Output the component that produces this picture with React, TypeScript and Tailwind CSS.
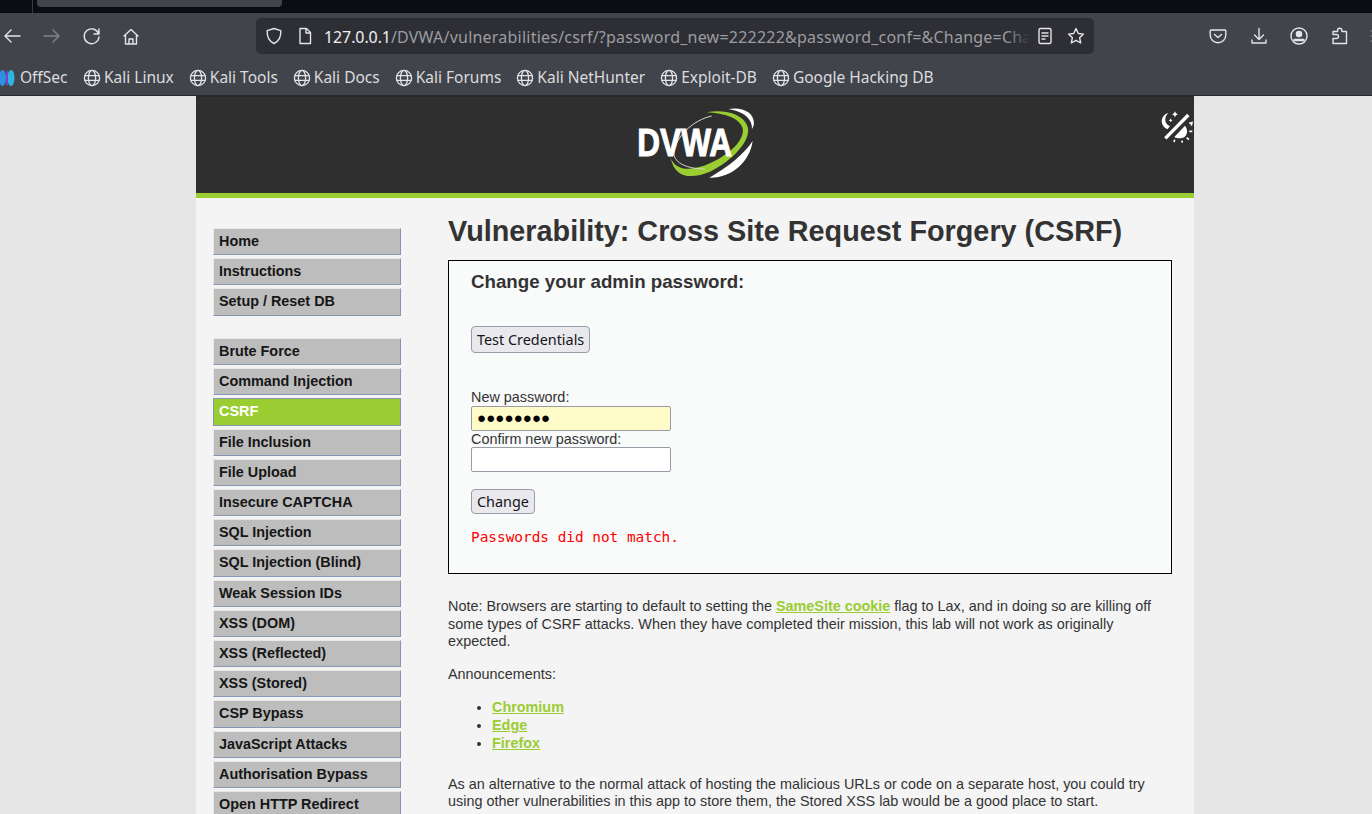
const firstMenu = ["Home", "Instructions", "Setup / Reset DB"];
const secondMenu = [
  "Brute Force", "Command Injection", "CSRF", "File Inclusion", "File Upload", "Insecure CAPTCHA",
  "SQL Injection", "SQL Injection (Blind)", "Weak Session IDs", "XSS (DOM)", "XSS (Reflected)",
  "XSS (Stored)", "CSP Bypass", "JavaScript Attacks", "Authorisation Bypass", "Open HTTP Redirect",
];
const bookmarks = ["Kali Linux", "Kali Tools", "Kali Docs", "Kali Forums", "Kali NetHunter", "Exploit-DB", "Google Hacking DB"];

function Globe() {
  return <svg width="18" height="18" viewBox="0 0 18 18" fill="none" stroke="#e4e4e6" strokeWidth="1.3" className="shrink-0">
    <circle cx="9" cy="9" r="7.6"/>
    <ellipse cx="9" cy="9" rx="3.6" ry="7.6"/>
    <path d="M1.6 6.6h14.8M1.6 11.4h14.8"/>
  </svg>
}

function ToolIcon({children, className = ""}: {children: React.ReactNode; className?: string}) {
  return <svg width="20" height="20" viewBox="0 0 20 20" fill="none" stroke="#e4e4e6" strokeWidth="1.4" strokeLinecap="round" strokeLinejoin="round" className={`shrink-0 ${className}`}>
    {children}
  </svg>
}

function Toolbar() {
  return <div className="h-[41px] pt-[5px] flex items-start overflow-hidden bg-[#42444c]">
    <div className="w-[40px] shrink-0 pl-[2px] pt-[8px]">
      <ToolIcon><path d="M18 10H3M9 4l-6 6 6 6"/></ToolIcon>
    </div>
    <div className="w-[40px] shrink-0 pl-[2px] pt-[8px]">
      <ToolIcon className="opacity-40"><path d="M2 10h15M11 4l6 6-6 6"/></ToolIcon>
    </div>
    <div className="w-[39px] shrink-0 pl-[2px] pt-[8px]">
      <ToolIcon><path d="M16.5 7.5A7.4 7.4 0 1 0 17 11M17 3v5h-5"/></ToolIcon>
    </div>
    <div className="w-[137px] shrink-0 pl-[2px] pt-[9px]">
      <ToolIcon><path d="M3 9l7-6.500L17 9M4.500 8v9h11V8M8 17v-5h4v5"/></ToolIcon>
    </div>
    <div className="w-[838px] h-[36px] shrink-0 flex items-center rounded-[5px] bg-[#2e2f35]">
      <div className="ml-[8px]">
        <ToolIcon><path d="M10 2.500l6.800 2.200c.3 6-1.700 10.400-6.800 12.800-5.100-2.400-7.100-6.800-6.800-12.800z"/></ToolIcon>
      </div>
      <div className="ml-[11px]">
        <ToolIcon><path d="M5 2.500h6.500l4 4v11h-10.500zM11 2.500v4.500h4.500"/></ToolIcon>
      </div>
      <div className="relative ml-[9px] pt-[1px] w-[706px] overflow-hidden whitespace-nowrap text-[16px] tracking-[0.220px] text-[#9c9da1]">
        <span className="text-[#f0f0f2] tracking-[-0.100px]">127.0.0.1</span>/DVWA/vulnerabilities/csrf/?password_new=222222&amp;password_conf=&amp;Change=Change
        <div className="absolute right-0 top-0 bottom-0 w-[24px] bg-gradient-to-r from-transparent to-[#2e2f35]"/>
      </div>
      <div className="ml-[5px]">
        <ToolIcon><rect x="4" y="2.500" width="12" height="15" rx="1.500"/><path d="M7 7h6M7 10h6M7 13h3"/></ToolIcon>
      </div>
      <div className="ml-[11px]">
        <ToolIcon><path d="M10 2.500l2.300 5 5.200.6-3.900 3.600 1.100 5.300-4.700-2.700-4.700 2.700 1.100-5.300-3.900-3.600 5.200-.6z"/></ToolIcon>
      </div>
    </div>
    <div className="ml-[114px] flex shrink-0 pt-[8px] gap-[20.500px]">
      <ToolIcon><path d="M3 4h14a.8.8 0 0 1 .8.8V9a7.800 7.800 0 0 1-15.600 0V4.800A.8.8 0 0 1 3 4zM6.500 8.500l3.500 3 3.500-3"/></ToolIcon>
      <ToolIcon><path d="M10 2.500v10.500M5.500 9l4.500 4.500L14.500 9M3 14v3h14v-3"/></ToolIcon>
      <ToolIcon><circle cx="10" cy="10" r="8"/><circle cx="10" cy="8" r="2.600" fill="#e4e4e6"/><path d="M5.500 14h9" strokeWidth="2.500"/></ToolIcon>
      <ToolIcon><path d="M3 17.500v-5h3.500a2 2 0 0 0 0-4H3v-3h4.500V4.500a2.200 2.200 0 0 1 4.400 0v1h4.600v12z"/></ToolIcon>
      <ToolIcon className="opacity-30"><path d="M1 5h16M1 10h16M1 15h16"/></ToolIcon>
    </div>
  </div>
}

function BookmarksBar() {
  return <div className="h-[42px] pt-[6px] flex items-center gap-[15px] bg-[#42444c] border-b border-b-[#26272b] text-[15.500px] text-[#dcdcde] whitespace-nowrap overflow-hidden">
    <div className="flex items-center gap-[5px] -ml-[1px] w-[69px]">
      <svg width="16" height="18" viewBox="0 0 16 18" className="shrink-0">
        <ellipse cx="3.500" cy="9" rx="3.500" ry="8" fill="#2f8fe0"/>
        <ellipse cx="12" cy="9" rx="3.500" ry="8" fill="#2fb6e0"/>
        <path d="M8 2v14" stroke="#7b3fd0" strokeWidth="2"/>
      </svg>
      <span>OffSec</span>
    </div>
    {bookmarks.map((name) => <div key={name} className="flex items-center gap-[3px]">
      <Globe/>
      <span>{name}</span>
    </div>)}
  </div>
}

function Logo() {
  return <svg width="123.300" height="76.700" viewBox="105 30 370 230" className="block">
    <path d="M320 52C370 42 430 55 443 95C455 135 400 195 330 230C280 250 225 255 212 188C225 225 270 232 330 205C390 178 435 135 428 100C420 70 375 55 320 52Z" fill="#9acd32"/>
    <path d="M335 63C280 75 225 125 222 175C222 205 265 222 315 222" fill="none" stroke="#d4d4d4" strokeWidth="3"/>
    <path d="M385 42C425 35 462 50 462 85C462 90 460 97 456 102C458 75 435 50 385 42Z" fill="#fff"/>
    <path d="M328 248C395 250 450 200 458 138C430 180 385 215 328 248Z" fill="#fff"/>
    <text x="112" y="183" fontFamily="'Liberation Sans', sans-serif" fontWeight="700" fontSize="118" textLength="284" lengthAdjust="spacingAndGlyphs" fill="#fff" stroke="#fff" strokeWidth="3">DVWA</text>
  </svg>
}

function ThemeIcon() {
  return <svg width="33.300" height="33.300" viewBox="90 45 100 100" className="shrink-0" fill="#fff" stroke="none">
    <path d="M115 53C90 62 88 92 112 103L120 94C102 86 102 68 115 53Z"/>
    <path d="M135 49l3 6 6 3-6 3-3 6-3-6-6-3 6-3zM122 70l2 4 4 2-4 2-2 4-2-4-4-2 4-2z"/>
    <path d="M106 130L175 60" stroke="#fff" strokeWidth="10"/>
    <path d="M133 126L165 92C178 108 170 130 150 130C143 130 138 129 133 126Z"/>
    <path d="M178 85l8-2-2 9M178 109h9M170 128l7 6M156 137l1 6M134 134l-2 7" fill="none" stroke="#fff" strokeWidth="5"/>
  </svg>
}

function MenuItem({name}: {name: string}) {
  const active = name === "CSRF";
  return <li className={`h-[27.200px] mb-[3px] pl-[5px] font-bold text-[14.400px] leading-[25.200px] border border-[#e8e8e8] border-r-[#8796b4] border-b-[#8796b4] ${active ? "bg-[#9acd32] text-white border-l-[#8796b4] border-t-[#8796b4]" : "bg-[#bdbdbd] text-[#161616]"}`}>
    {name}
  </li>
}

function GreenLink({children}: {children: React.ReactNode}) {
  return <a href="#" className="font-bold underline text-[#9acd32]">{children}</a>
}

export default function App() {
  return <div className="h-[814px] overflow-hidden bg-[#e6e6e6] font-['Liberation_Sans',sans-serif]">
    <div className="font-['Noto_Sans',sans-serif]">
      <div className="h-[13px] flex bg-[#0c0d12]">
        <div className="ml-[32px] w-px h-[13px] bg-[#3a3b40]"/>
        <div className="ml-[4px] w-[245px] h-[7px] rounded-b-[4px] bg-[#42444c]"/>
      </div>
      <Toolbar/>
      <BookmarksBar/>
    </div>

    <div className="w-[998px] ml-[196px] bg-[#f4f4f4]">
      <div className="h-[97px] flex bg-[#2f2f2f] border-t border-t-[#26272b]">
        <div className="ml-[439px] mt-[8px]"><Logo/></div>
        <div className="ml-[402px] mt-[13px]"><ThemeIcon/></div>
      </div>
      <div className="h-[5px] bg-[#9acd32]"/>

      <div className="flex">
        <div className="ml-[17px] w-[188px] pt-[30px] shrink-0">
          <ul>{firstMenu.map((name) => <MenuItem key={name} name={name}/>)}</ul>
          <ul className="mt-[22.500px]">{secondMenu.map((name) => <MenuItem key={name} name={name}/>)}</ul>
        </div>

        <div className="ml-[47px] w-[724px] text-[14.400px] leading-[17.500px] text-[#333333]">
          <h1 className="mt-[16px] text-[28.800px] leading-[34px] font-bold whitespace-nowrap">Vulnerability: Cross Site Request Forgery (CSRF)</h1>
          <div className="mt-[12px] h-[314px] pl-[22px] border border-black bg-[#f9fafa]">
            <h3 className="mt-[10px] text-[18.720px] leading-[22px] font-bold">Change your admin password:</h3>
            <button className="block mt-[33px] h-[27px] px-[5px] rounded-[4px] border border-[#9b9ba8] bg-[#e9e9ed] text-[14.400px] leading-[22px] text-[#15141a] font-['Noto_Sans',sans-serif]">Test Credentials</button>
            <label className="block mt-[35px] h-[18px] leading-[18px]">New password:</label>
            <div className="h-[25px] w-[200px] pl-[5px] rounded-[2px] border border-[#9b9ba8] bg-[#fffbc8] text-black text-[15px] leading-[22px] tracking-[0.100px]">●●●●●●●●</div>
            <label className="block h-[16px] leading-[16px]">Confirm new password:</label>
            <div className="h-[25px] w-[200px] rounded-[2px] border border-[#9b9ba8] bg-white"/>
            <button className="block mt-[17px] h-[25px] px-[5px] rounded-[4px] border border-[#9b9ba8] bg-[#e9e9ed] text-[14.400px] leading-[22px] text-[#15141a] font-['Noto_Sans',sans-serif]">Change</button>
            <pre className="mt-[15px] text-[14.400px] leading-[17px] text-[#ff0000] font-['DejaVu_Sans_Mono',monospace]">Passwords did not match.</pre>
          </div>

          <p className="mt-[24px]">Note: Browsers are starting to default to setting the <GreenLink>SameSite cookie</GreenLink> flag to Lax, and in doing so are killing off some types of CSRF attacks. When they have completed their mission, this lab will not work as originally expected.</p>
          <p className="mt-[15px]">Announcements:</p>
          <ul className="mt-[16px] pl-[44px] list-disc">
            <li className="mb-[0.500px]"><GreenLink>Chromium</GreenLink></li>
            <li className="mb-[0.500px]"><GreenLink>Edge</GreenLink></li>
            <li><GreenLink>Firefox</GreenLink></li>
          </ul>
          <p className="mt-[23px]">As an alternative to the normal attack of hosting the malicious URLs or code on a separate host, you could try using other vulnerabilities in this app to store them, the Stored XSS lab would be a good place to start.</p>
        </div>
      </div>
    </div>
  </div>
}
